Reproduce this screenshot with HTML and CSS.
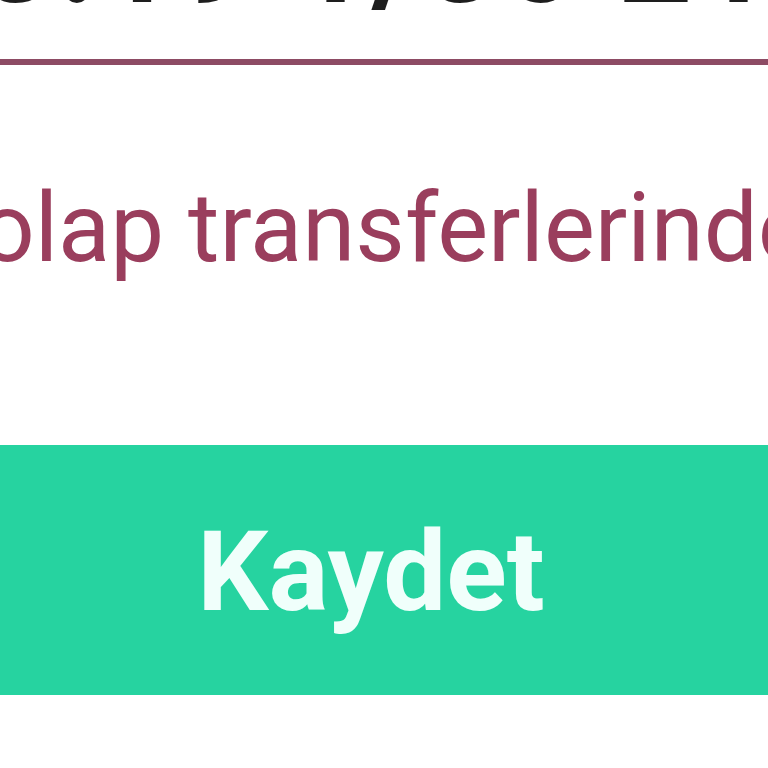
FILE: index.html
```html
<!DOCTYPE html>
<html lang="tr">
<head>
<meta charset="utf-8">
<title>Kaydet</title>
<link rel="stylesheet" href="styles.css">
</head>
<body>
<div class="screen">
  <div class="date-row">
    <div class="date">3.19 1/30 211</div>
  </div>
  <div class="divider"></div>
  <div class="note">olap transferlerinde</div>
  <button class="save">Kaydet</button>
  <div class="rest"></div>
</div>
</body>
</html>
```
FILE: styles.css
```css
html, body {
  margin: 0;
  padding: 0;
  background: #ffffff;
}
.screen {
  width: 768px;
  height: 768px;
  overflow: hidden;
  display: flex;
  flex-direction: column;
  font-family: Roboto, "Noto Sans", sans-serif;
}
.date-row {
  height: 59px;
  overflow: hidden;
  flex: none;
  display: flex;
  align-items: flex-end;
}
.date {
  flex: none;
  font-weight: 700;
  font-size: 130px;
  line-height: 1;
  color: #1e1e1e;
  margin-bottom: 36px;
  margin-left: -20px;
  white-space: nowrap;
  letter-spacing: 4px;
}
.divider {
  height: 6px;
  background: #8d4b64;
  flex: none;
}
.note {
  margin-top: 115px;
  margin-left: -20px;
  font-size: 96px;
  line-height: 1;
  color: #9a3e5d;
  white-space: nowrap;
  flex: none;
}
.save {
  margin-top: 169px;
  height: 250px;
  width: 100%;
  flex: none;
  border: none;
  background: #26d3a0;
  color: #f0fffb;
  font-family: Roboto, "Noto Sans", sans-serif;
  font-weight: 700;
  font-size: 112px;
  padding: 4px 26px 0 0;
  line-height: 1;
}
.rest {
  flex: 1;
}
```
